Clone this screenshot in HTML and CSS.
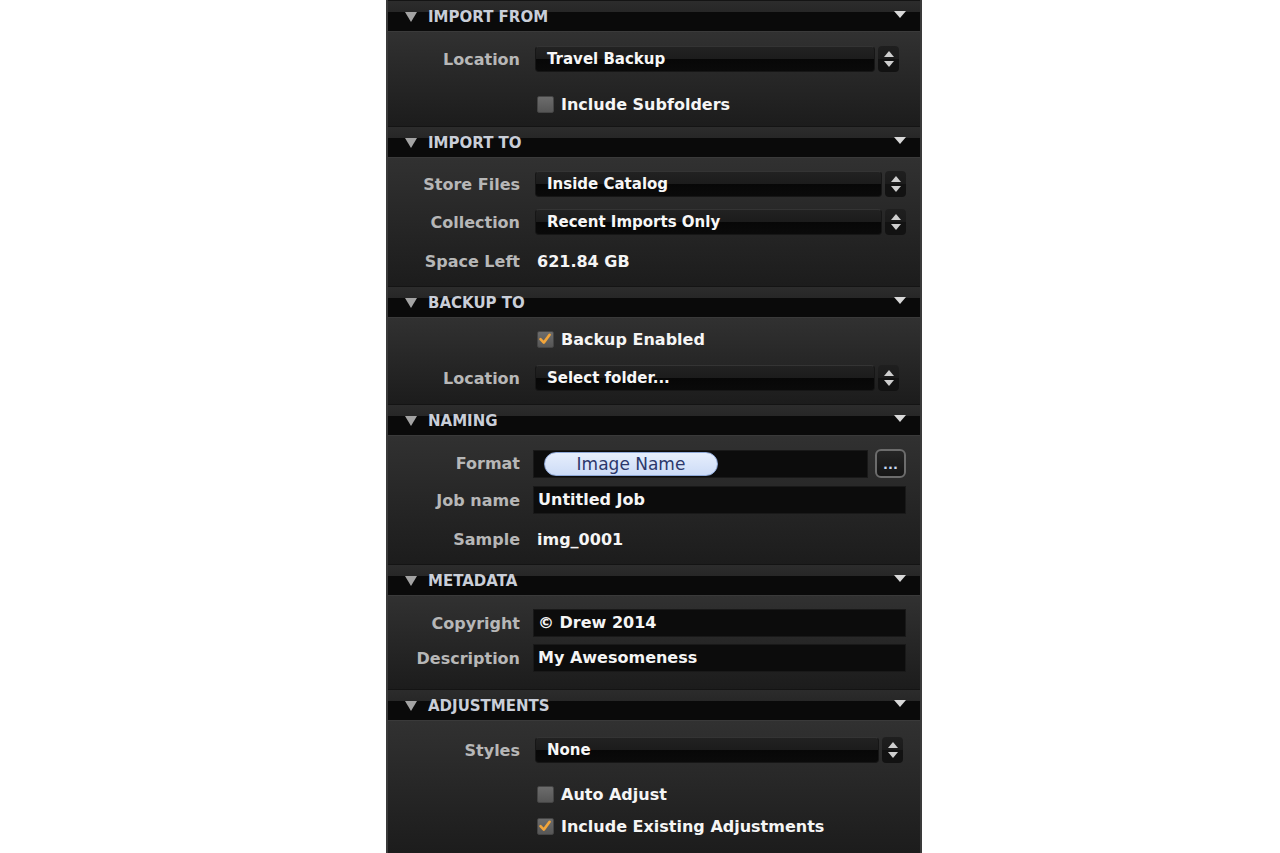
FILE: index.html
```html
<!DOCTYPE html>
<html>
<head>
<meta charset="utf-8">
<link rel="stylesheet" href="styles.css">
</head>
<body>
<div class="panel">

  <section class="sec">
    <div class="hdr"><span class="tri"></span><span class="title">IMPORT FROM</span><span class="tri-r"></span></div>
    <div class="body s-from">
      <div class="row">
        <span class="lbl">Location</span>
        <div class="select"><span class="sel-main">Travel Backup</span><span class="stepper"><i class="up"></i><i class="dn"></i></span></div>
      </div>
      <div class="row crow mt-19">
        <span class="lbl"></span>
        <span class="cb"><span class="box"></span>Include Subfolders</span>
      </div>
    </div>
  </section>

  <section class="sec">
    <div class="hdr"><span class="tri"></span><span class="title">IMPORT TO</span><span class="tri-r"></span></div>
    <div class="body s-to">
      <div class="row">
        <span class="lbl">Store Files</span>
        <div class="select wide"><span class="sel-main">Inside Catalog</span><span class="stepper"><i class="up"></i><i class="dn"></i></span></div>
      </div>
      <div class="row mt-10">
        <span class="lbl">Collection</span>
        <div class="select wide"><span class="sel-main">Recent Imports Only</span><span class="stepper"><i class="up"></i><i class="dn"></i></span></div>
      </div>
      <div class="row mt-11">
        <span class="lbl">Space Left</span>
        <span class="val">621.84 GB</span>
      </div>
    </div>
  </section>

  <section class="sec">
    <div class="hdr"><span class="tri"></span><span class="title">BACKUP TO</span><span class="tri-r"></span></div>
    <div class="body s-backup">
      <div class="row crow">
        <span class="lbl"></span>
        <span class="cb"><span class="box checked"><svg viewBox="0 0 16 16" width="16" height="16"><path d="M3.5 8.2 L6.8 11.6 L12.6 3.8" fill="none" stroke="#f2a53a" stroke-width="2.6" stroke-linecap="round" stroke-linejoin="round"/></svg></span>Backup Enabled</span>
      </div>
      <div class="row mt-13">
        <span class="lbl">Location</span>
        <div class="select"><span class="sel-main">Select folder...</span><span class="stepper"><i class="up"></i><i class="dn"></i></span></div>
      </div>
    </div>
  </section>

  <section class="sec">
    <div class="hdr"><span class="tri"></span><span class="title">NAMING</span><span class="tri-r"></span></div>
    <div class="body s-naming">
      <div class="row">
        <span class="lbl">Format</span>
        <div class="fmt">
          <div class="field fmt-field"><span class="pill">Image Name</span></div>
          <span class="more">...</span>
        </div>
      </div>
      <div class="row mt-9">
        <span class="lbl">Job name</span>
        <div class="field">Untitled Job</div>
      </div>
      <div class="row mt-11">
        <span class="lbl">Sample</span>
        <span class="val">img_0001</span>
      </div>
    </div>
  </section>

  <section class="sec">
    <div class="hdr"><span class="tri"></span><span class="title">METADATA</span><span class="tri-r"></span></div>
    <div class="body s-meta">
      <div class="row">
        <span class="lbl">Copyright</span>
        <div class="field">© Drew 2014</div>
      </div>
      <div class="row mt-7">
        <span class="lbl">Description</span>
        <div class="field">My Awesomeness</div>
      </div>
    </div>
  </section>

  <section class="sec">
    <div class="hdr"><span class="tri"></span><span class="title">ADJUSTMENTS</span><span class="tri-r"></span></div>
    <div class="body s-adj">
      <div class="row">
        <span class="lbl">Styles</span>
        <div class="select mid"><span class="sel-main">None</span><span class="stepper"><i class="up"></i><i class="dn"></i></span></div>
      </div>
      <div class="row crow mt-18">
        <span class="lbl"></span>
        <span class="cb"><span class="box"></span>Auto Adjust</span>
      </div>
      <div class="row crow mt-8">
        <span class="lbl"></span>
        <span class="cb"><span class="box checked"><svg viewBox="0 0 16 16" width="16" height="16"><path d="M3.5 8.2 L6.8 11.6 L12.6 3.8" fill="none" stroke="#f2a53a" stroke-width="2.6" stroke-linecap="round" stroke-linejoin="round"/></svg></span>Include Existing Adjustments</span>
      </div>
    </div>
  </section>

</div>
</body>
</html>
```
FILE: styles.css
```css
html, body {
  margin: 0;
  padding: 0;
  background: #ffffff;
}
body {
  font-family: "DejaVu Sans", Verdana, sans-serif;
  font-weight: bold;
  font-size: 16px;
}
.panel {
  width: 532px;
  height: 853px;
  margin-left: 386px;
  background: #1e1e1e;
  border-left: 2px solid #3a3a3a;
  border-right: 2px solid #3a3a3a;
  overflow: hidden;
}
.hdr {
  height: 31px;
  box-sizing: border-box;
  border-top: 1px solid #141414;
  background: linear-gradient(#2c2c2c 0, #272727 11px, #0a0a0a 11px, #0a0a0a 100%);
  display: flex;
  align-items: center;
  padding: 0 14px 0 17px;
}
.tri {
  width: 0;
  height: 0;
  border-left: 6px solid transparent;
  border-right: 6px solid transparent;
  border-top: 10px solid #a3a3a3;
  margin-top: 1px;
}
.title {
  color: #c9ced8;
  font-size: 15px;
  margin-left: 11px;
  flex: 1;
  line-height: 1;
  margin-top: 3px;
}
.tri-r {
  width: 0;
  height: 0;
  border-left: 6px solid transparent;
  border-right: 6px solid transparent;
  border-top: 7px solid #d8d8d8;
  margin-top: -4px;
}
.body {
  background: linear-gradient(#313131, #1c1c1c);
  border-top: 1px solid #3a3a3a;
}
.s-from { padding: 13px 0 10px; }
.s-to { padding: 12px 0 11px; }
.s-backup { padding: 9px 0 12px; }
.s-naming { padding: 13px 0 11px; }
.s-meta { padding: 13px 0 17px; }
.s-adj { padding: 15px 0 15px; }
.mt-7 { margin-top: 7px; }
.mt-8 { margin-top: 8px; }
.mt-9 { margin-top: 9px; }
.mt-10 { margin-top: 10px; }
.mt-11 { margin-top: 11px; }
.mt-13 { margin-top: 13px; }
.mt-18 { margin-top: 18px; }
.mt-19 { margin-top: 19px; }

.row {
  display: grid;
  grid-template-columns: 132px 1fr;
  column-gap: 15px;
  align-items: center;
  height: 28px;
  padding-right: 14px;
}
.row.crow { height: 24px; }
.lbl {
  color: #b7b7b7;
  text-align: right;
  white-space: nowrap;
}
.val {
  color: #f5f5f5;
  padding-left: 2px;
}
.select {
  display: flex;
  height: 26px;
  margin-right: 7px;
}
.select.wide { margin-right: 0; }
.select.mid { margin-right: 3px; }
.sel-main {
  flex: 1;
  box-sizing: border-box;
  height: 26px;
  border-radius: 4px;
  border: 1px solid #161616;
  border-top-color: #343434;
  background: linear-gradient(#222222 0, #1c1c1c 50%, #070707 50%, #0a0a0a 100%);
  color: #f7f7f7;
  font-size: 15px;
  line-height: 24px;
  padding-left: 11px;
}
.stepper {
  width: 21px;
  margin-left: 3px;
  box-sizing: border-box;
  height: 26px;
  border-radius: 4px;
  background: linear-gradient(#1f1f1f 0, #1b1b1b 50%, #121212 50%, #121212 100%);
  display: flex;
  flex-direction: column;
  align-items: center;
  justify-content: center;
  gap: 4px;
}
.stepper .up {
  width: 0; height: 0;
  border-left: 5px solid transparent;
  border-right: 5px solid transparent;
  border-bottom: 6px solid #cfcfcf;
}
.stepper .dn {
  width: 0; height: 0;
  border-left: 5px solid transparent;
  border-right: 5px solid transparent;
  border-top: 6px solid #cfcfcf;
}
.cb {
  display: flex;
  align-items: center;
  color: #f5f5f5;
  padding-left: 2px;
}
.box {
  width: 17px;
  height: 17px;
  box-sizing: border-box;
  border: 1px solid #454545;
  border-radius: 2px;
  background: linear-gradient(#6c6c6c, #565656);
  margin-right: 7px;
  display: inline-flex;
}
.box svg { display: block; margin: -1px 0 0 -1px; }
.field {
  box-sizing: border-box;
  height: 28px;
  margin-left: -2px;
  background: #0c0c0c;
  border: 1px solid #191919;
  color: #f5f5f5;
  line-height: 26px;
  padding-left: 4px;
}
.fmt {
  display: flex;
  align-items: center;
  margin-left: -2px;
}
.fmt .fmt-field {
  flex: 1;
  margin-left: 0;
  padding: 0 0 0 10px;
  display: flex;
  align-items: center;
}
.pill {
  box-sizing: border-box;
  width: 174px;
  height: 24px;
  border-radius: 12px;
  border: 1px solid #8fa9d8;
  background: linear-gradient(#e6eefc, #cddcf7);
  color: #2d386b;
  font-weight: normal;
  font-size: 17px;
  line-height: 22px;
  text-align: center;
}
.more {
  width: 31px;
  height: 29px;
  box-sizing: border-box;
  margin-left: 7px;
  border: 2px solid #6c6c6c;
  border-radius: 6px;
  background: linear-gradient(#262626, #151515);
  color: #c9d8f2;
  font-size: 13px;
  text-align: center;
  line-height: 27px;
}
```
